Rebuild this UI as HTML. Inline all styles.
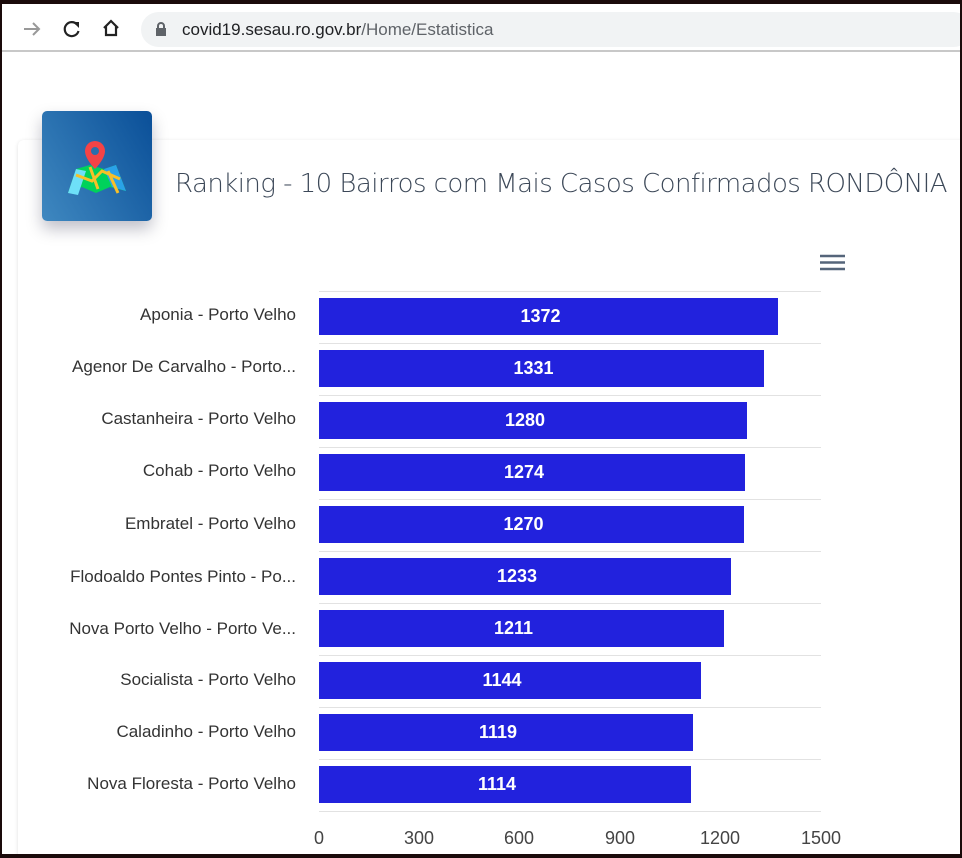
<!DOCTYPE html>
<html><head><meta charset="utf-8"><style>
*{margin:0;padding:0;box-sizing:border-box}
html,body{width:962px;height:858px;overflow:hidden}
body{background:#1a0a0a;position:relative;font-family:"Liberation Sans",sans-serif}
#win{position:absolute;left:2px;top:4px;width:958px;height:850px;background:#fff;overflow:hidden}
#bar{position:absolute;left:0;top:0;width:958px;height:48px;background:#fff;border-bottom:2px solid #c8c8c8}
#url{position:absolute;left:139px;top:8px;width:830px;height:35px;border-radius:18px;background:#f1f3f4}
#url span{position:absolute;left:41px;top:8px;font-size:17px;color:#202124}
#card{position:absolute;left:16px;top:136px;width:960px;height:730px;background:#fff;border-radius:6px;box-shadow:0 1px 4px rgba(0,0,0,.12)}
#icon{position:absolute;left:40px;top:107px;width:110px;height:110px;border-radius:5px;background:linear-gradient(60deg,#3f88c0,#0a4f98);box-shadow:0 8px 16px rgba(0,0,40,.25)}
#title{position:absolute;left:175px;top:169px;font-size:26px;color:#3c4858;font-family:"DejaVu Sans","Liberation Sans",sans-serif;font-weight:300;letter-spacing:-0.55px;white-space:nowrap}
.lbl{position:absolute;right:666px;font-size:17px;color:#333;white-space:nowrap;margin-top:1px}
.b{position:absolute;left:319px;height:37px;background:#2222dd;color:#fff;font-weight:bold;font-size:18px;text-align:center;line-height:37px;padding-right:16px}
.g{position:absolute;left:319px;width:502px;height:1px;background:#e2e2e2}
.t{position:absolute;top:828px;font-size:18px;color:#444;transform:translateX(-50%)}
</style></head><body>
<div id="win">
<div id="bar">
<svg style="position:absolute;left:20px;top:16px" width="20" height="18" viewBox="0 0 20 18"><path d="M2 9h15M11 3l6 6-6 6" fill="none" stroke="#999" stroke-width="2"/></svg>
<svg style="position:absolute;left:60px;top:15px" width="20" height="20" viewBox="0 0 20 20"><path d="M15 5.5A7 7 0 1 0 16.5 12" fill="none" stroke="#222" stroke-width="2.2"/><path d="M11 3h6v6z" fill="#222"/></svg>
<svg style="position:absolute;left:99px;top:14px" width="20" height="20" viewBox="0 0 20 20"><path d="M3 10L10 3l7 7M5 8v9h10V8" fill="none" stroke="#222" stroke-width="2.2"/></svg>
<div id="url"><svg style="position:absolute;left:14px;top:10px" width="12" height="15" viewBox="0 0 12 15"><rect x="1" y="6" width="10" height="8" fill="#5f6368"/><path d="M3 6V4a3 3 0 0 1 6 0v2" fill="none" stroke="#5f6368" stroke-width="2"/></svg><span>covid19.sesau.ro.gov.br<span style="position:static;color:#5f6368">/Home/Estatistica</span></span></div>
</div>
<div id="card"></div>
<div id="icon"><svg style="position:absolute;left:22px;top:26px" width="64" height="60" viewBox="0 0 64 60"><path d="M4 56l8-24 14-4 14 4 12-4 10 26-16-4-14 6-14-6z" fill="#00d25b"/><path d="M4 56l8-24 10 2-8 24z" fill="#6ee0f8"/><path d="M40 32l12-4 10 26-14-4z" fill="#2aa2e8"/><path d="M12 38l16 6 10-10 18 8M26 30l8 22M44 34l10 22" fill="none" stroke="#f7c028" stroke-width="3"/><path d="M31 4a10 10 0 0 1 10 10c0 8-10 18-10 18S21 22 21 14A10 10 0 0 1 31 4z" fill="#f44346"/><circle cx="31" cy="14" r="4" fill="#2c6eab"/></svg></div>
</div>
<div id="title">Ranking - 10 Bairros com Mais Casos Confirmados RONDÔNIA</div>
<svg style="position:absolute;left:820px;top:254px" width="25" height="17"><path d="M0 2h25M0 8.5h25M0 15h25" stroke="#55657a" stroke-width="2.5"/></svg>
<div class="g" style="top:291px"></div><div class="g" style="top:343px"></div><div class="g" style="top:395px"></div><div class="g" style="top:447px"></div><div class="g" style="top:499px"></div><div class="g" style="top:551px"></div><div class="g" style="top:603px"></div><div class="g" style="top:655px"></div><div class="g" style="top:707px"></div><div class="g" style="top:759px"></div><div class="g" style="top:811px"></div>
<div class="lbl" style="top:304px">Aponia - Porto Velho</div><div class="b" style="top:298px;width:459px">1372</div>
<div class="lbl" style="top:356px">Agenor De Carvalho - Porto...</div><div class="b" style="top:350px;width:445px">1331</div>
<div class="lbl" style="top:408px">Castanheira - Porto Velho</div><div class="b" style="top:402px;width:428px">1280</div>
<div class="lbl" style="top:460px">Cohab - Porto Velho</div><div class="b" style="top:454px;width:426px">1274</div>
<div class="lbl" style="top:513px">Embratel - Porto Velho</div><div class="b" style="top:506px;width:425px">1270</div>
<div class="lbl" style="top:566px">Flodoaldo Pontes Pinto - Po...</div><div class="b" style="top:558px;width:412px">1233</div>
<div class="lbl" style="top:618px">Nova Porto Velho - Porto Ve...</div><div class="b" style="top:610px;width:405px">1211</div>
<div class="lbl" style="top:669px">Socialista - Porto Velho</div><div class="b" style="top:662px;width:382px">1144</div>
<div class="lbl" style="top:721px">Caladinho - Porto Velho</div><div class="b" style="top:714px;width:374px">1119</div>
<div class="lbl" style="top:773px">Nova Floresta - Porto Velho</div><div class="b" style="top:766px;width:372px">1114</div>
<div class="t" style="left:319px">0</div><div class="t" style="left:419px">300</div><div class="t" style="left:519px">600</div><div class="t" style="left:620px">900</div><div class="t" style="left:720px">1200</div><div class="t" style="left:821px">1500</div>
</body></html>
